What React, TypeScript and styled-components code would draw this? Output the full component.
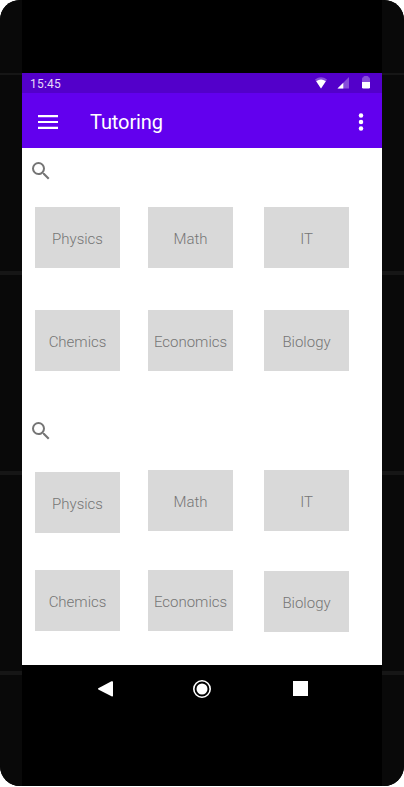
import React from "react";
import styled, { createGlobalStyle } from "styled-components";

const GlobalStyle = createGlobalStyle`
  html, body { margin: 0; padding: 0; background: #fff; }
  *, *::before, *::after { box-sizing: border-box; }
  svg { display: block; flex: none; }
`;

const Device = styled.div`
  display: grid;
  grid-template-columns: 22px 360px 22px;
  width: 404px;
  height: 786px;
  border-radius: 20px;
  overflow: hidden;
  background: #000;
  font-family: Roboto, "Liberation Sans", sans-serif;
`;

const Rail = styled.div`
  background: linear-gradient(
      #161616 0 2px,
      transparent 2px 198px,
      #161616 198px 202px,
      transparent 202px 398px,
      #161616 398px 402px,
      transparent 402px 598px,
      #161616 598px 602px,
      transparent 602px
    )
    0 73px no-repeat #090909;
`;

const Face = styled.div`
  display: flex;
  flex-direction: column;
  padding-top: 73px;
`;

const StatusBar = styled.header`
  display: flex;
  align-items: center;
  justify-content: space-between;
  height: 20px;
  padding: 0 12px 0 8px;
  background: #5300ca;
`;

const Clock = styled.time`
  color: #e6dbf8;
  font-size: 12px;
  line-height: 20px;
  letter-spacing: 0.2px;
  padding-top: 1px;
`;

const StatusIcons = styled.div`
  display: flex;
  align-items: center;
`;

const AppBar = styled.div`
  display: flex;
  align-items: center;
  height: 55px;
  padding: 3px 8px 0 13px;
  background: #6200ee;
`;

const IconButton = styled.button`
  display: flex;
  padding: 0;
  border: 0;
  background: none;
`;

const Title = styled.h1`
  flex: 1;
  margin: 0 0 0 28px;
  color: #fff;
  font-size: 20px;
  font-weight: 400;
  line-height: 24px;
  letter-spacing: -0.1px;
`;

const Content = styled.main`
  height: 517px;
  background: #fff;
`;

const Section = styled.section`
  height: 260px;
  padding: 11px 0 0 7px;
`;

const Subjects = styled.div<{ $top: number; $row: number }>`
  display: grid;
  grid-template-columns: 113px 116px 85px;
  grid-auto-rows: ${(p) => p.$row}px;
  align-items: start;
  margin-top: ${(p) => p.$top}px;
  padding-left: 6px;
`;

const Subject = styled.button<{ $drop?: number }>`
  width: 85px;
  height: 61px;
  margin: ${(p) => p.$drop ?? 0}px 0 0;
  padding: 2px 0 0;
  border: 0;
  background: #d9d9d9;
  color: #757575;
  font: 300 15px/20px Roboto, "Liberation Sans", sans-serif;
  text-align: center;
  white-space: nowrap;
`;

const NavBar = styled.nav`
  display: grid;
  grid-template-columns: 95px 100px 15px;
  align-items: center;
  height: 47px;
  padding-left: 76px;
`;

const SearchIcon = () => (
  <svg width="24" height="24" viewBox="0 0 24 24" fill="#757575">
    <path d="M15.5 14h-.79l-.28-.27A6.47 6.47 0 0 0 16 9.5 6.5 6.5 0 1 0 9.5 16c1.61 0 3.09-.59 4.23-1.57l.27.28v.79l5 4.99L20.49 19l-4.99-5zm-6 0C7.01 14 5 11.99 5 9.5S7.01 5 9.5 5 14 7.01 14 9.5 11.99 14 9.5 14z" />
  </svg>
);

type Item = { name: string; drop?: number };

const sections: { top: number; row: number; items: Item[] }[] = [
  {
    top: 24,
    row: 103,
    items: [
      { name: "Physics" },
      { name: "Math" },
      { name: "IT" },
      { name: "Chemics" },
      { name: "Economics" },
      { name: "Biology" },
    ],
  },
  {
    top: 27,
    row: 100,
    items: [
      { name: "Physics", drop: 2 },
      { name: "Math" },
      { name: "IT" },
      { name: "Chemics" },
      { name: "Economics" },
      { name: "Biology", drop: 1 },
    ],
  },
];

export default function App() {
  return (
    <>
      <GlobalStyle />
      <Device>
        <Rail />
        <Face>
          <StatusBar>
            <Clock>15:45</Clock>
            <StatusIcons>
              <svg width="57" height="20" viewBox="0 0 57 20" fill="#fff">
                <path d="M2 6.500Q8 2 14 6.500L8 15.500z" opacity=".3" />
                <path d="M3.200 8.200Q8 5 12.800 8.200L8 15.500z" />
                <path d="M24.500 15.500L36 4v11.500z" opacity=".3" />
                <path d="M24.500 15.500L30.300 9.700v5.800z" />
                <path d="M49 9V6q0-1.500 1.300-1.700Q50.500 3 52 3h2Q55.500 3 55.700 4.300Q57 4.500 57 6v3z" opacity=".3" />
                <path d="M49 9h8v5.200q0 1.300-1.300 1.300h-5.400q-1.300 0-1.300-1.300z" />
              </svg>
            </StatusIcons>
          </StatusBar>
          <AppBar>
            <IconButton aria-label="Menu">
              <svg width="27" height="24" viewBox="0 0 27 24" fill="#fff">
                <path d="M3 5h20v2.200H3zM3 11h20v2H3zM3 16.700h20v2.200H3z" />
              </svg>
            </IconButton>
            <Title>Tutoring</Title>
            <IconButton aria-label="More options">
              <svg width="26" height="24" viewBox="0 0 26 24" fill="#fff">
                <circle cx="13" cy="5.500" r="2.250" />
                <circle cx="13" cy="12" r="2.250" />
                <circle cx="13" cy="18.500" r="2.250" />
              </svg>
            </IconButton>
          </AppBar>
          <Content>
            {sections.map((section, i) => (
              <Section key={i}>
                <IconButton aria-label="Search">
                  <SearchIcon />
                </IconButton>
                <Subjects $top={section.top} $row={section.row}>
                  {section.items.map((item) => (
                    <Subject key={item.name} $drop={item.drop}>
                      {item.name}
                    </Subject>
                  ))}
                </Subjects>
              </Section>
            ))}
          </Content>
          <NavBar>
            <svg width="15" height="16" viewBox="0 0 15 16" fill="#fff">
              <path d="M.3 7.200L13.500.3Q15-.2 15 1v13.800q0 1-1.500.5L.3 8.400q-.6-.6 0-1.200z" />
            </svg>
            <svg width="18" height="18" viewBox="0 0 18 18">
              <circle cx="9" cy="9" r="8.200" fill="none" stroke="#fff" strokeWidth="1.600" />
              <circle cx="9" cy="9" r="5.500" fill="#fff" />
            </svg>
            <svg width="15" height="15" viewBox="0 0 15 15" fill="#fff">
              <rect width="15" height="15" />
            </svg>
          </NavBar>
        </Face>
        <Rail />
      </Device>
    </>
  );
}
